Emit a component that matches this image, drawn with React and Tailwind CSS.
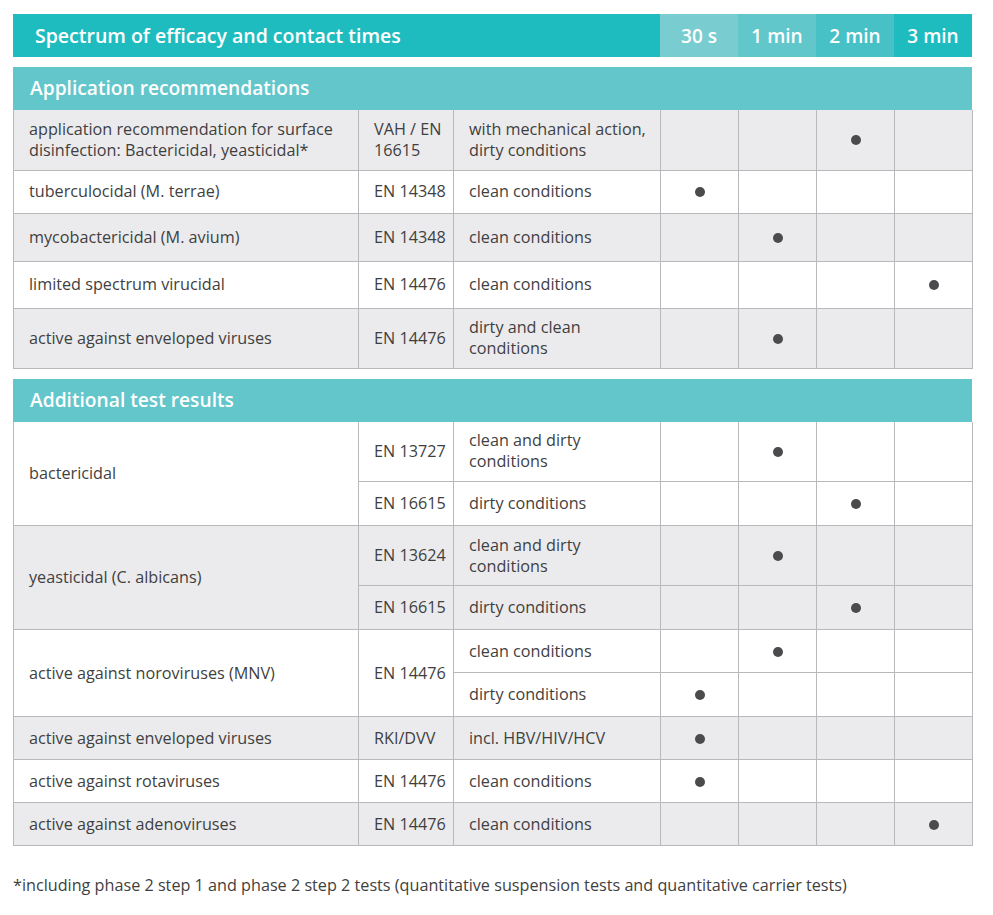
import React from "react";

const times = [
  { label: "30 s", bg: "bg-[#79cdd1]" },
  { label: "1 min", bg: "bg-[#62c7cb]" },
  { label: "2 min", bg: "bg-[#47c1c5]" },
  { label: "3 min", bg: "bg-[#1fbcbf]" },
];

// each row: name, norm, condition, dot column (0-3), height, gray, spans
const recommendations = [
  {
    name: "application recommendation for surface disinfection: Bactericidal, yeasticidal*",
    norm: "VAH / EN 16615",
    cond: "with mechanical action, dirty conditions",
    dot: 2,
    h: "h-[60px]",
    gray: true,
  },
  { name: "tuberculocidal (M. terrae)", norm: "EN 14348", cond: "clean conditions", dot: 0, h: "h-[43px]" },
  { name: "mycobactericidal (M. avium)", norm: "EN 14348", cond: "clean conditions", dot: 1, h: "h-[48px]", gray: true },
  { name: "limited spectrum virucidal", norm: "EN 14476", cond: "clean conditions", dot: 3, h: "h-[47px]" },
  {
    name: "active against enveloped viruses",
    norm: "EN 14476",
    cond: "dirty and clean conditions",
    dot: 1,
    h: "h-[60px]",
    gray: true,
  },
];

const additional = [
  { name: "bactericidal", nameSpan: 2, norm: "EN 13727", cond: "clean and dirty conditions", dot: 1, h: "h-[60px]" },
  { norm: "EN 16615", cond: "dirty conditions", dot: 2, h: "h-[44px]" },
  { name: "yeasticidal (C. albicans)", nameSpan: 2, norm: "EN 13624", cond: "clean and dirty conditions", dot: 1, h: "h-[60px]", gray: true },
  { norm: "EN 16615", cond: "dirty conditions", dot: 2, h: "h-[44px]", gray: true },
  { name: "active against noroviruses (MNV)", nameSpan: 2, norm: "EN 14476", normSpan: 2, cond: "clean conditions", dot: 1, h: "h-[43px]" },
  { cond: "dirty conditions", dot: 0, h: "h-[44px]" },
  { name: "active against enveloped viruses", norm: "RKI/DVV", cond: "incl. HBV/HIV/HCV", dot: 0, h: "h-[43px]", gray: true },
  { name: "active against rotaviruses", norm: "EN 14476", cond: "clean conditions", dot: 0, h: "h-[43px]" },
  { name: "active against adenoviruses", norm: "EN 14476", cond: "clean conditions", dot: 3, h: "h-[43px]", gray: true },
];

const cell = "border border-[#b9b9bb] align-middle";

function Dot() {
  return <span className="inline-block w-[10px] h-[10px] rounded-full bg-[#4b4b4d]" />;
}

function Section({ title, rows }) {
  return (
    <div>
      <div className="h-[43px] bg-[#62c6cb] flex items-center pl-[17px] text-white text-[19.2px] font-semibold">
        {title}
      </div>
      <table className="w-full border-collapse table-fixed text-[16.2px] leading-[21px] text-[#3f3f41]">
        <colgroup>
          <col className="w-[345px]" />
          <col className="w-[95px]" />
          <col className="w-[207px]" />
          <col className="w-[78px]" />
          <col className="w-[78px]" />
          <col className="w-[78px]" />
          <col className="w-[78px]" />
        </colgroup>
        <tbody>
          {rows.map((r, i) => (
            <tr key={i} className={`${r.h} ${r.gray ? "bg-[#ebebed]" : "bg-white"}`}>
              {r.name && (
                <td rowSpan={r.nameSpan || 1} className={`${cell} border-t-0 pl-[15px] pr-2`}>
                  {r.name}
                </td>
              )}
              {r.norm && (
                <td rowSpan={r.normSpan || 1} className={`${cell} border-t-0 pl-[15px] pr-1`}>
                  {r.norm}
                </td>
              )}
              <td className={`${cell} border-t-0 pl-[15px] pr-1`}>{r.cond}</td>
              {[0, 1, 2, 3].map((c) => (
                <td key={c} className={`${cell} border-t-0 text-center`}>
                  {r.dot === c && <Dot />}
                </td>
              ))}
            </tr>
          ))}
        </tbody>
      </table>
    </div>
  );
}

export default function App() {
  return (
    <div className="bg-white w-[993px] h-[915px] pt-[14px] pl-[13px] font-['Open_Sans',sans-serif]">
      <div className="w-[959px] flex flex-col gap-[10px]">
        <div className="h-[43px] bg-[#1fbcbf] flex text-white font-semibold">
          <div className="flex-1 flex items-center pl-[22px] text-[19.5px]">
            Spectrum of efficacy and contact times
          </div>
          {times.map((t) => (
            <div key={t.label} className={`w-[78px] flex items-center justify-center pt-[2px] text-[19px] ${t.bg}`}>
              {t.label}
            </div>
          ))}
        </div>
        <Section title="Application recommendations" rows={recommendations} />
        <Section title="Additional test results" rows={additional} />
      </div>
      <p className="mt-[27px] text-[16.2px] text-[#3f3f41]">
        *including phase 2 step 1 and phase 2 step 2 tests (quantitative suspension tests and quantitative carrier tests)
      </p>
    </div>
  );
}
